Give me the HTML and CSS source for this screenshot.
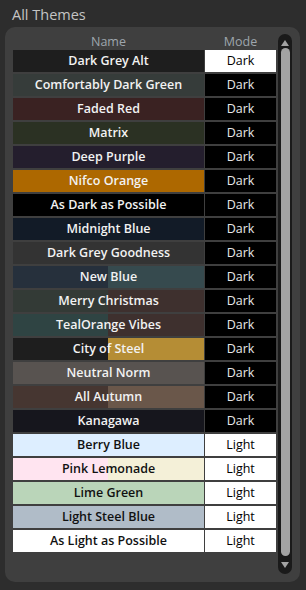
FILE: index.html
```html
<!DOCTYPE html>
<html>
<head>
    <title>All Themes</title>
    <link rel="stylesheet" href="styles.css">
</head>
<body>
    <div class="title">All Themes</div>
    <div class="panel">
        <div class="table">
            <div class="head">
                <span class="name">Name</span>
                <span class="mode">Mode</span>
            </div>
            <div class="row selected"><span class="name dark-grey-alt">Dark Grey Alt</span><span class="mode">Dark</span></div>
            <div class="row"><span class="name comfy-green">Comfortably Dark Green</span><span class="mode">Dark</span></div>
            <div class="row"><span class="name faded-red">Faded Red</span><span class="mode">Dark</span></div>
            <div class="row"><span class="name matrix">Matrix</span><span class="mode">Dark</span></div>
            <div class="row"><span class="name deep-purple">Deep Purple</span><span class="mode">Dark</span></div>
            <div class="row"><span class="name nifco-orange">Nifco Orange</span><span class="mode">Dark</span></div>
            <div class="row"><span class="name as-dark">As Dark as Possible</span><span class="mode">Dark</span></div>
            <div class="row"><span class="name midnight-blue">Midnight Blue</span><span class="mode">Dark</span></div>
            <div class="row"><span class="name grey-goodness">Dark Grey Goodness</span><span class="mode">Dark</span></div>
            <div class="row"><span class="name new-blue">New Blue</span><span class="mode">Dark</span></div>
            <div class="row"><span class="name merry-christmas">Merry Christmas</span><span class="mode">Dark</span></div>
            <div class="row"><span class="name teal-orange">TealOrange Vibes</span><span class="mode">Dark</span></div>
            <div class="row"><span class="name city-steel">City of Steel</span><span class="mode">Dark</span></div>
            <div class="row"><span class="name neutral-norm">Neutral Norm</span><span class="mode">Dark</span></div>
            <div class="row"><span class="name all-autumn">All Autumn</span><span class="mode">Dark</span></div>
            <div class="row"><span class="name kanagawa">Kanagawa</span><span class="mode">Dark</span></div>
            <div class="row light"><span class="name berry-blue">Berry Blue</span><span class="mode">Light</span></div>
            <div class="row light"><span class="name pink-lemonade">Pink Lemonade</span><span class="mode">Light</span></div>
            <div class="row light"><span class="name lime-green">Lime Green</span><span class="mode">Light</span></div>
            <div class="row light"><span class="name steel-blue">Light Steel Blue</span><span class="mode">Light</span></div>
            <div class="row light"><span class="name as-light">As Light as Possible</span><span class="mode">Light</span></div>
        </div>
        <div class="scrollbar">
            <div class="arrow up"></div>
            <div class="thumb"></div>
            <div class="arrow down"></div>
        </div>
    </div>
</body>
</html>
```

FILE: styles.css
```css
body {
    margin: 0;
    background-color: #2d2d2d;
    font-family: "Open Sans", "Noto Sans", sans-serif;
    width: 306px;
    height: 590px;
    overflow: hidden;
}
.title {
    color: #c4c4c4;
    font-size: 14.5px;
    line-height: 18px;
    padding: 6px 0 0 12px;
    height: 21px;
}
.panel {
    margin: 0 6px 0 5px;
    height: 540px;
    padding: 7px 8px 8px 8px;
    background-color: #3f3f3f;
    border-radius: 10px;
    display: grid;
    grid-template-columns: 263px 14px;
    gap: 2px;
}
.table {
    display: flex;
    flex-direction: column;
    gap: 2px;
}
.head {
    display: grid;
    grid-template-columns: 191px 71px;
    gap: 1px;
    height: 14px;
    color: #9ea6ad;
    font-size: 12.5px;
    line-height: 16px;
    text-align: center;
}
.row {
    display: grid;
    grid-template-columns: 191px 71px;
    gap: 1px;
    height: 22px;
    font-size: 12.5px;
    line-height: 22px;
    text-align: center;
}
.row .name {
    color: #f2f2f2;
    font-weight: 600;
}
.row .mode {
    background-color: #000;
    color: #e8e8e8;
}
.row.selected .mode {
    background-color: #fff;
    color: #000;
}
.row.light .name {
    color: #111;
}
.row.light .mode {
    background-color: #fff;
    color: #000;
}
.dark-grey-alt { background-color: #1e1e1e; }
.comfy-green { background-color: #363c3a; }
.faded-red { background-color: #3a2222; }
.matrix { background-color: #2b3123; }
.deep-purple { background-color: #241e2d; }
.nifco-orange { background-color: #ad6800; }
.as-dark { background-color: #000; }
.midnight-blue { background-color: #121b27; }
.grey-goodness { background-color: #333333; }
.new-blue { background: linear-gradient(to right, #26303c 50%, #364a4e 50%); }
.merry-christmas { background: linear-gradient(to right, #333a36 50%, #3e302e 50%); }
.teal-orange { background: linear-gradient(to right, #2f4443 50%, #3e302e 50%); }
.city-steel { background: linear-gradient(to right, #1e1e1e 50%, #b58d35 50%); }
.neutral-norm { background-color: #585350; }
.all-autumn { background: linear-gradient(to right, #463631 50%, #6a574a 50%); }
.kanagawa { background-color: #16161d; }
.berry-blue { background-color: #ddeeff; }
.pink-lemonade { background: linear-gradient(to right, #ffe4f0 50%, #f4f0d8 50%); }
.lime-green { background-color: #bad5b9; }
.steel-blue { background-color: #b0bcc8; }
.as-light { background-color: #fff; }
.scrollbar {
    background-color: #1a1a1a;
    border-radius: 7px;
    display: flex;
    flex-direction: column;
    align-items: center;
    padding: 6px 0;
    gap: 2px;
}
.arrow {
    width: 0;
    height: 0;
    border-left: 4px solid transparent;
    border-right: 4px solid transparent;
}
.arrow.up {
    border-bottom: 6px solid #a3a3a3;
}
.arrow.down {
    border-top: 6px solid #a3a3a3;
    margin-top: 4px;
}
.thumb {
    width: 9px;
    flex: 1;
    background-color: #a3a3a3;
    border-radius: 5px;
}
```
